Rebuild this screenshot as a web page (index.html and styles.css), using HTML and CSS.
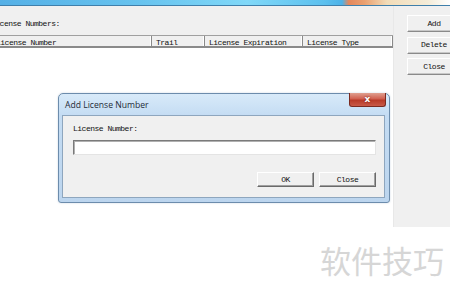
FILE: index.html
```html
<!DOCTYPE html>
<html>
<head>
<meta charset="utf-8">
<link rel="stylesheet" href="styles.css">
</head>
<body>
<div class="screen">
  <div class="topbar"></div>
  <div class="window">
    <div class="main">
      <div class="caption">License Numbers:</div>
      <div class="header">
        <div class="col c1">License Number</div>
        <div class="col c2">Trail</div>
        <div class="col c3">License Expiration</div>
        <div class="col c4">License Type</div>
      </div>
      <div class="list"></div>
    </div>
    <div class="side">
      <button class="sbtn">Add</button>
      <button class="sbtn">Delete</button>
      <button class="sbtn">Close</button>
    </div>
  </div>

  <div class="dialog">
    <div class="dtitle">
      <span class="dtext">Add License Number</span>
      <span class="xbtn">x</span>
    </div>
    <div class="client">
      <div class="flabel">License Number:</div>
      <div class="finput"></div>
      <div class="dbtns">
        <button class="dbtn">OK</button>
        <button class="dbtn">Close</button>
      </div>
    </div>
  </div>

  <div class="watermark">软件技巧</div>
</div>
</body>
</html>
```

FILE: styles.css
```css
* { box-sizing: border-box; }
html, body { margin: 0; padding: 0; background: #ffffff; }
.screen {
  position: relative;
  width: 450px;
  height: 294px;
  overflow: hidden;
  font-family: "Liberation Mono", monospace;
  font-size: 8px;
  letter-spacing: -0.5px;
  color: #111111;
}
.topbar {
  height: 6px;
  border-bottom: 1px solid #3f7fab;
  background: linear-gradient(90deg, #55b0e6 0%, #66c2ee 30%, #80d8f8 55%, #5cc0ee 72%, #4cb2e8 76%, #e4875c 77.5%, #eaa070 81%, #f2dcb8 86%, #f4ecd8 95%, #ffffff 100%);
}
.window {
  display: flex;
  height: 221px;
}
.main {
  width: 393px;
  display: flex;
  flex-direction: column;
  background: #ffffff;
}
.caption {
  height: 29px;
  background: #f0f0f0;
  padding: 14px 0 0 0;
  margin-left: -9px;
  line-height: 8px;
}
.header {
  display: flex;
  height: 13px;
  background: #f0f0f0;
  border-top: 1px solid #a0a0a0;
  border-bottom: 2px solid #8a8a8a;
  margin-left: -8px;
}
.col {
  padding: 3px 0 0 4px;
  line-height: 8px;
  border-right: 1px solid #8a8a8a;
  box-shadow: inset -1px 0 0 #ffffff;
  white-space: nowrap;
  overflow: hidden;
}
.c1 { width: 160px; }
.c2 { width: 53px; }
.c3 { width: 98px; }
.c4 { width: 90px; }
.list { flex: 1; background: #ffffff; }
.side {
  flex: 1;
  background: #f0f0f0;
  border-left: 1px solid #e8e8e8;
  padding: 9px 0 0 13px;
  display: flex;
  flex-direction: column;
  gap: 4.5px;
}
.sbtn {
  width: 54px;
  height: 17px;
  font: inherit;
  letter-spacing: inherit;
  color: #111111;
  background: #f0f0f0;
  border: 1px solid;
  border-color: #ffffff #8a8a8a #8a8a8a #ffffff;
  box-shadow: inset 0 -1px 0 #c8c8c8;
  padding: 0;
  text-align: center;
  line-height: 14px;
}

.dialog {
  position: absolute;
  left: 58px;
  top: 93px;
  width: 332px;
  height: 110px;
  border: 1px solid #6c8cac;
  border-radius: 5px 5px 3px 3px;
  background: linear-gradient(180deg, #d8eaf9 0%, #c4dcf3 20%, #bcd5ee 100%);
  padding: 0 4px 4px 3px;
  display: flex;
  flex-direction: column;
  box-shadow: 0 0 2px rgba(120,150,180,0.4);
}
.dtitle {
  height: 21px;
  display: flex;
  justify-content: space-between;
  align-items: flex-start;
}
.dtext {
  font-family: "Open Sans", "Noto Sans", sans-serif;
  font-size: 8.6px;
  letter-spacing: 0;
  color: #1e2a36;
  padding: 5px 0 0 3px;
  line-height: 12px;
}
.xbtn {
  width: 37px;
  height: 14px;
  margin-top: -1px;
  margin-right: -1px;
  border: 1px solid #7a2a20;
  border-top: none;
  border-radius: 0 0 3px 3px;
  background: linear-gradient(180deg, #e0a090 0%, #d06050 45%, #b83a28 55%, #c85a48 100%);
  color: #ffffff;
  font-family: "DejaVu Sans", sans-serif;
  font-weight: bold;
  font-size: 9px;
  letter-spacing: 0;
  text-align: center;
  line-height: 12px;
  text-shadow: 0 0 2px #6a1a10;
}
.client {
  flex: 1;
  background: #f0f0f0;
  border: 1px solid #8ea6be;
  padding: 8px 8px 0 10px;
  display: flex;
  flex-direction: column;
}
.flabel {
  line-height: 10px;
  height: 10px;
}
.finput {
  margin-top: 6px;
  height: 15px;
  width: 303px;
  background: #ffffff;
  border: 1px solid;
  border-color: #7a7a7a #e4e4e4 #e4e4e4 #7a7a7a;
  box-shadow: inset 1px 1px 0 #b0b0b0;
}
.dbtns {
  margin-top: 17px;
  display: flex;
  justify-content: flex-end;
  gap: 5px;
}
.dbtn {
  width: 57px;
  height: 15px;
  font: inherit;
  letter-spacing: inherit;
  color: #111111;
  background: #f0f0f0;
  border: 1px solid;
  border-color: #ffffff #6a6a6a #6a6a6a #ffffff;
  box-shadow: inset -1px -1px 0 #a0a0a0;
  padding: 0;
  text-align: center;
  line-height: 12px;
}
.watermark {
  position: absolute;
  left: 320px;
  top: 238px;
  font-family: "Noto Sans CJK SC", sans-serif;
  font-size: 31px;
  letter-spacing: 0;
  line-height: 44px;
  color: #d6d6d6;
}
```
